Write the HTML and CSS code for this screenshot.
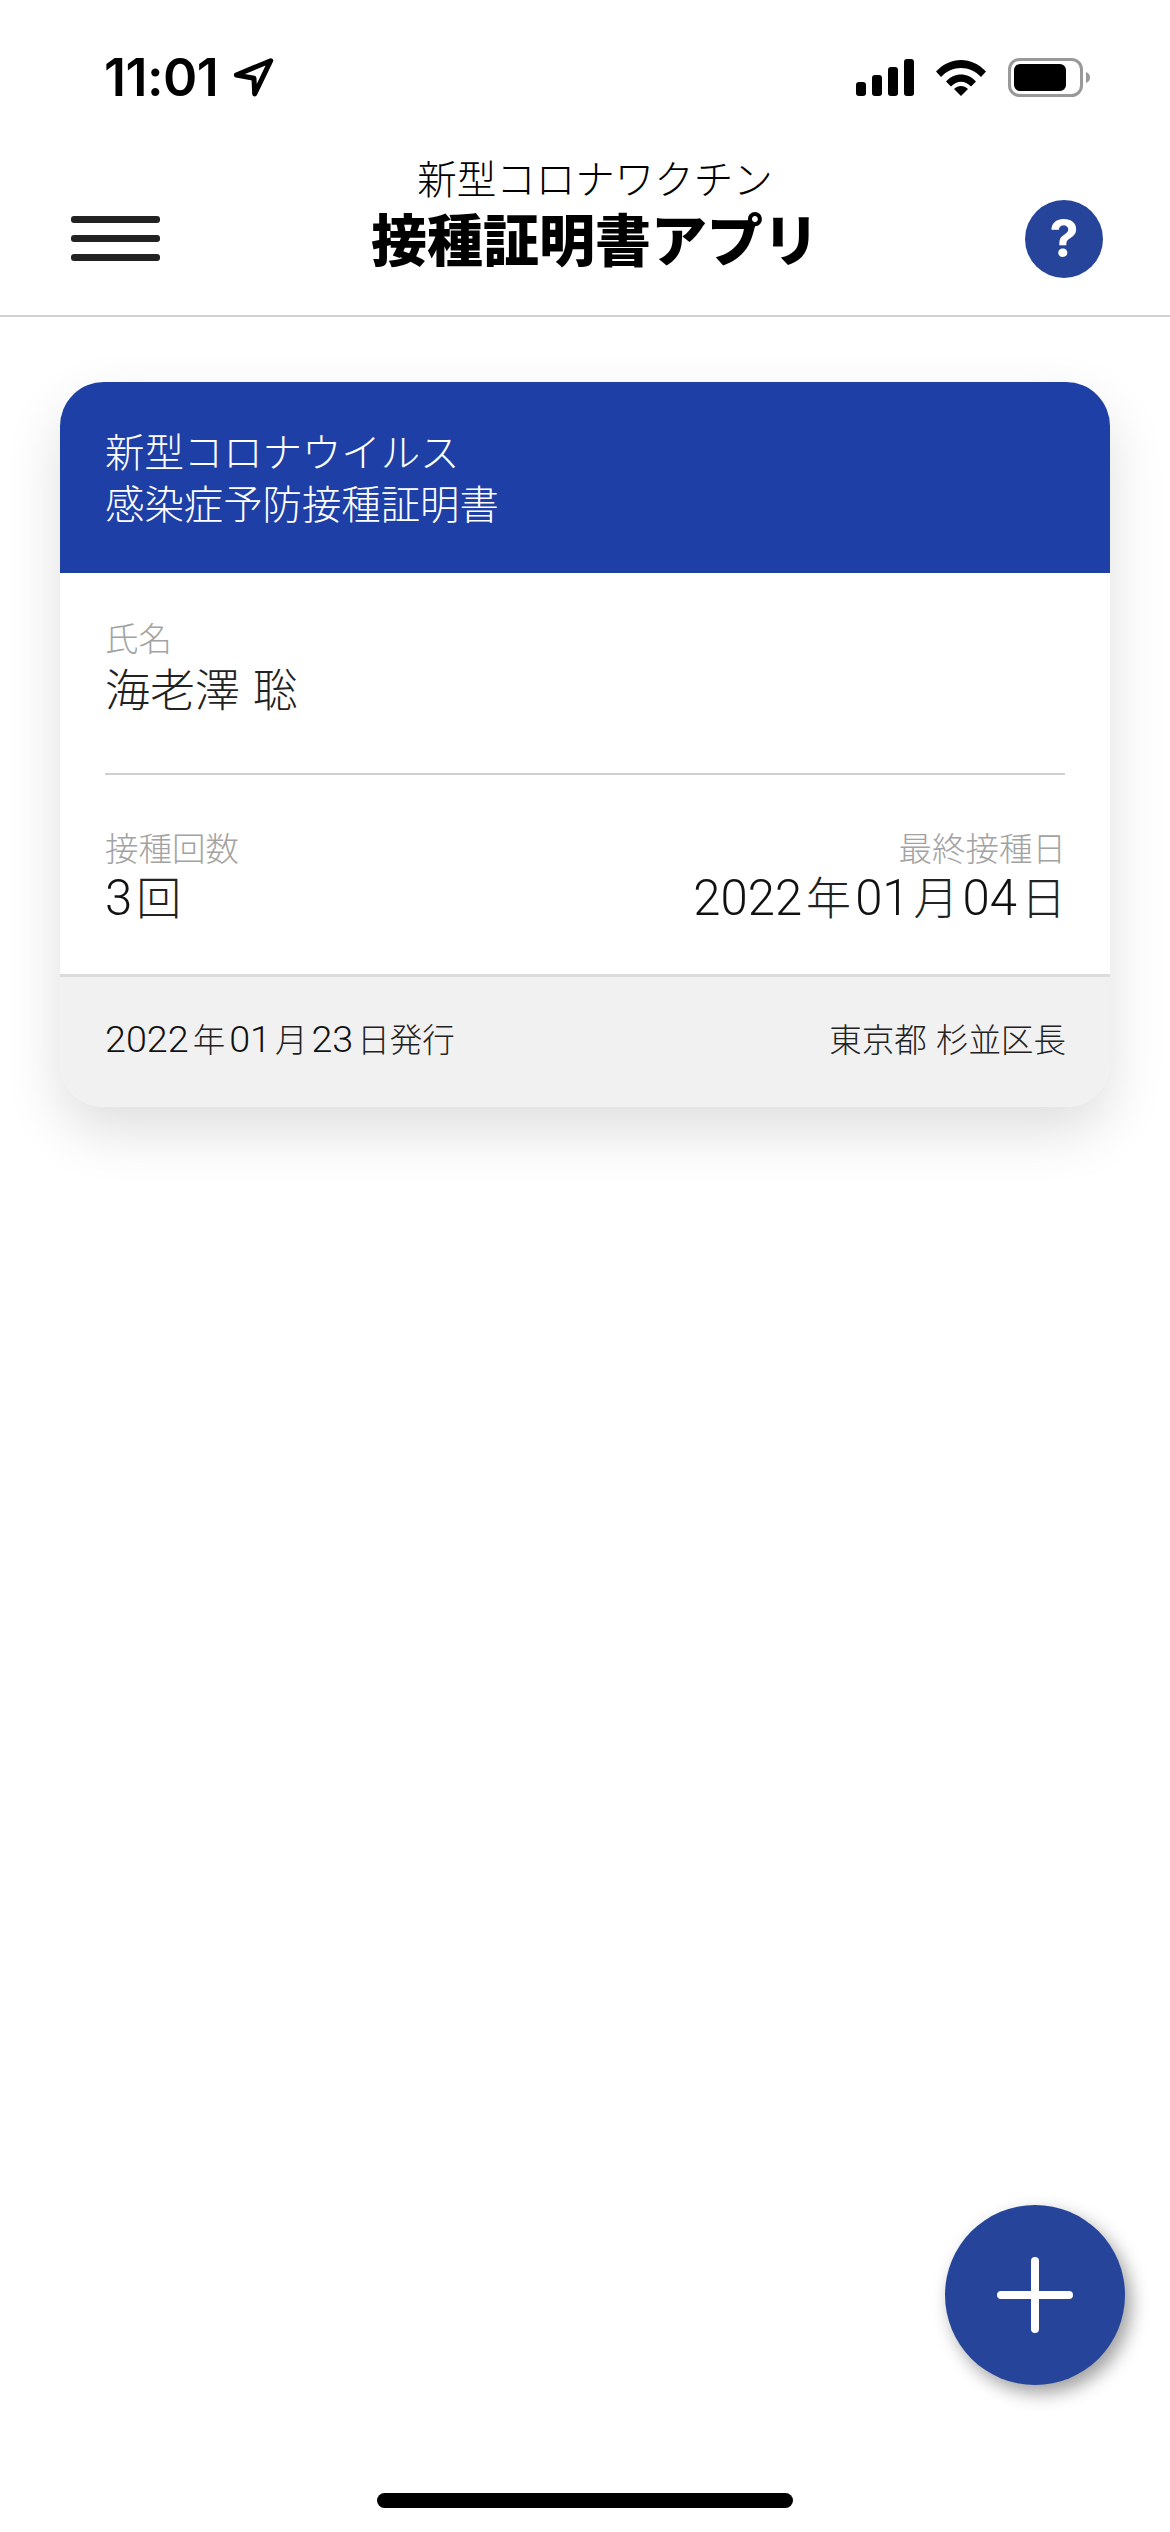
FILE: index.html
```html
<!DOCTYPE html>
<html lang="ja">
<head>
  <meta charset="UTF-8">
  <title>接種証明書アプリ</title>
  <meta name="viewport" content="width=device-width, initial-scale=1.0">
  <link rel="stylesheet" href="styles.css">
</head>
<body>
  <div class="status-bar">
    <div class="status-time">
      <span>11:01</span>
      <svg class="icon-location" width="40" height="40" viewBox="0 0 40 40">
        <path d="M36.700 3.700 2.300 18 20 21.300 20.700 37z" fill="none" stroke="#000" stroke-width="5" stroke-linejoin="round"/>
      </svg>
    </div>
    <div class="status-icons">
      <svg class="icon-signal" width="58" height="37" viewBox="0 0 58 37">
        <rect x="0" y="23" width="10" height="14" rx="3"/>
        <rect x="16" y="16" width="10" height="21" rx="3"/>
        <rect x="32" y="8" width="10" height="29" rx="3"/>
        <rect x="48" y="0" width="10" height="37" rx="3"/>
      </svg>
      <svg class="icon-wifi" width="50" height="37" viewBox="0 0 50 37">
        <path d="M0 12.500C14-3 36-3 50 12.500L45 18C34 6 16 6 5 18z"/>
        <path d="M10 22.500C18 13 32 13 40 22.500L35 27.500C29 21 21 21 15 27.500z"/>
        <path d="M18 30C22 26 28 26 32 30L25 37z"/>
      </svg>
      <svg class="icon-battery" width="83" height="39" viewBox="0 0 83 39">
        <rect x="1.500" y="1.500" width="72" height="36" rx="10" fill="none" stroke="#999" stroke-width="3"/>
        <rect x="6" y="6" width="52" height="27" rx="6"/>
        <path d="M78 14c3 1 4 3 4 5.500s-1 4.500-4 5.500z" fill="#999"/>
      </svg>
    </div>
  </div>

  <header class="app-header">
    <button class="menu-btn" aria-label="menu">
      <span></span>
      <span></span>
      <span></span>
    </button>
    <div class="app-title">
      <div class="app-title-sub">新型コロナワクチン</div>
      <h1>接種証明書アプリ</h1>
    </div>
    <button class="help-btn" aria-label="help">?</button>
  </header>

  <main class="content">
    <section class="card">
      <div class="card-head">新型コロナウイルス<br>感染症予防接種証明書</div>
      <div class="card-name">
        <div class="label">氏名</div>
        <div class="value">海老澤 聡</div>
      </div>
      <div class="card-row">
        <div>
          <div class="label">接種回数</div>
          <div class="value"><span class="num">3</span>回</div>
        </div>
        <div class="align-right">
          <div class="label">最終接種日</div>
          <div class="value"><span class="num">2022</span>年<span class="num">01</span>月<span class="num">04</span>日</div>
        </div>
      </div>
      <div class="card-foot">
        <span><span class="num">2022</span>年<span class="num">01</span>月<span class="num">23</span>日発行</span>
        <span>東京都 杉並区長</span>
      </div>
    </section>
  </main>

  <button class="fab" aria-label="add">
    <svg width="76" height="76" viewBox="0 0 76 76">
      <path d="M38 4v68M4 38h68" stroke="#fff" stroke-width="8" stroke-linecap="round"/>
    </svg>
  </button>

  <div class="home-bar"><span></span></div>
</body>
</html>
```

FILE: styles.css
```css
* {
  box-sizing: border-box;
  margin: 0;
  padding: 0;
}

html,
body {
  height: 100%;
}

body {
  background: #fff;
  color: #222;
  font-family: Inter, "Noto Sans CJK JP", sans-serif;
  display: flex;
  flex-direction: column;
  position: relative;
  overflow: hidden;
}

button {
  border: none;
  background: none;
  font-family: inherit;
}

.status-bar {
  display: flex;
  justify-content: space-between;
  align-items: center;
  height: 78px;
  margin-top: 38px;
  padding: 0 79px 0 104px;
}

.status-time {
  display: flex;
  align-items: center;
  gap: 16px;
  color: #000;
  font-size: 52px;
  font-weight: 600;
  letter-spacing: -0.5px;
}

.status-icons {
  display: flex;
  align-items: center;
  gap: 22px;
}

.status-icons svg {
  display: block;
}

.app-header {
  display: flex;
  justify-content: space-between;
  align-items: center;
  height: 201px;
  padding: 46px 67px 0 71px;
  border-bottom: 2px solid #d0d0d0;
}

.menu-btn {
  display: flex;
  flex-direction: column;
  gap: 12px;
  width: 89px;
}

.menu-btn span {
  display: block;
  height: 7px;
  background: #222;
  border-radius: 3px;
}

.app-title {
  align-self: flex-start;
  margin: -5px 0 0 5px;
  text-align: center;
  color: #000;
}

.app-title-sub {
  font-size: 39.500px;
  font-weight: 300;
  line-height: 46px;
}

.app-title h1 {
  margin-top: 3px;
  font-size: 56px;
  font-weight: 900;
  line-height: 70px;
}

.help-btn {
  width: 78px;
  height: 78px;
  border-radius: 50%;
  background: #26459a;
  color: #fff;
  font-size: 52px;
  font-weight: 700;
  line-height: 78px;
  text-align: center;
}

.content {
  flex: 1;
  padding: 65px 60px 0;
}

.card {
  border-radius: 44px;
  overflow: hidden;
  background: #fff;
  box-shadow: 0 24px 56px rgba(0, 0, 0, 0.13);
}

.card-head {
  height: 191px;
  padding: 45px 45px 0;
  background: #1e40a6;
  color: #fff;
  font-size: 39.400px;
  font-weight: 300;
  line-height: 52px;
}

.card-name {
  margin: 0 45px;
  padding: 44px 0 54px;
  border-bottom: 2px solid #d0d0d0;
}

.card-name .value {
  margin-top: 2px;
}

.label {
  color: #a3a3a3;
  font-size: 33.500px;
  font-weight: 300;
  line-height: 44px;
}

.value {
  font-size: 45px;
  font-weight: 300;
  line-height: 56px;
}

.num {
  margin: 0 4px;
  color: #111;
  font-family: Roboto, sans-serif;
  font-size: 1.09em;
  font-weight: 300;
  line-height: 1;
}

.card-row {
  display: flex;
  justify-content: space-between;
  padding: 52px 44px 47px 45px;
}

.card-row .num:first-child,
.card-foot .num:first-child {
  margin-left: 0;
}

.align-right {
  text-align: right;
}

.card-foot {
  display: flex;
  justify-content: space-between;
  align-items: center;
  height: 133px;
  padding: 0 44px 9px 45px;
  background: #f1f1f1;
  border-top: 3px solid #dcdcdc;
  font-size: 32.500px;
  font-weight: 300;
}

.card-foot .num {
  font-size: 1.16em;
}

.fab {
  position: absolute;
  left: 945px;
  top: 2205px;
  display: flex;
  align-items: center;
  justify-content: center;
  width: 180px;
  height: 180px;
  border-radius: 50%;
  background: #26459a;
  box-shadow: 6px 8px 18px rgba(0, 0, 0, 0.38);
}

.home-bar {
  display: flex;
  justify-content: center;
  padding-bottom: 24px;
}

.home-bar span {
  width: 416px;
  height: 15px;
  border-radius: 8px;
  background: #000;
}
```
